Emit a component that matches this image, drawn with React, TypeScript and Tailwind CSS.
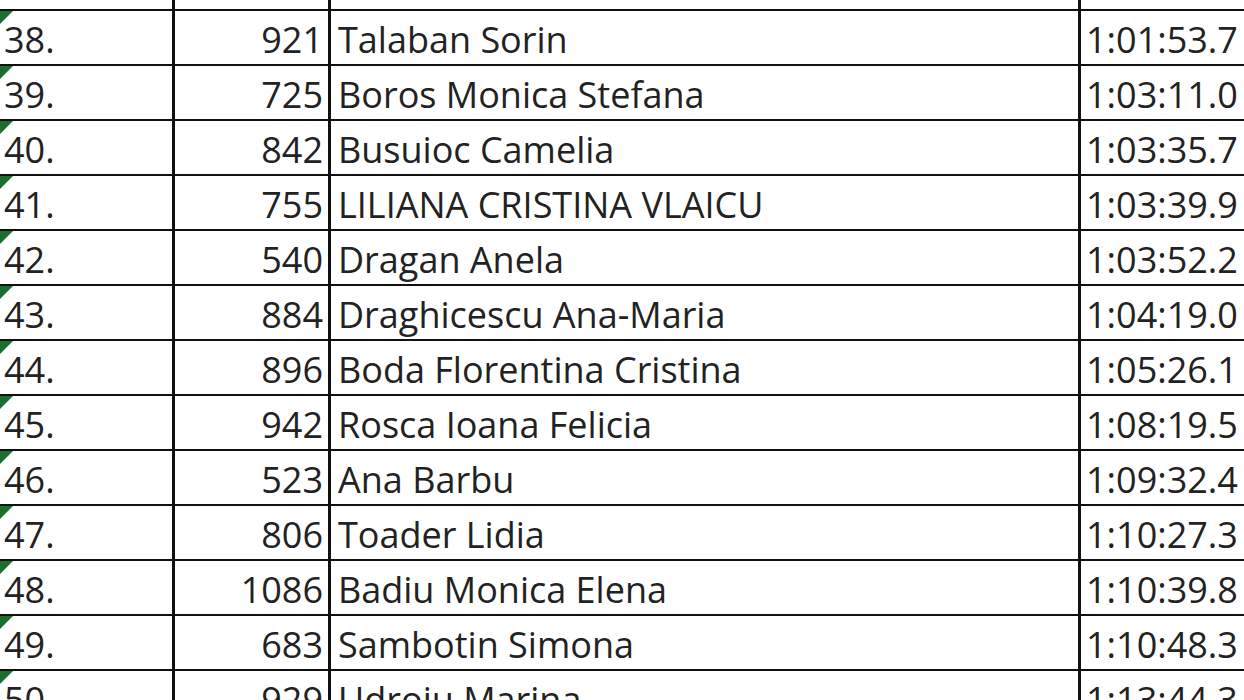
import React from "react";

type Row = { pos: string; bib: string; name: string; time: string };

const rows: Row[] = [
  { pos: "37.", bib: "", name: "", time: "" },
  { pos: "38.", bib: "921", name: "Talaban Sorin", time: "1:01:53.7" },
  { pos: "39.", bib: "725", name: "Boros Monica Stefana", time: "1:03:11.0" },
  { pos: "40.", bib: "842", name: "Busuioc Camelia", time: "1:03:35.7" },
  { pos: "41.", bib: "755", name: "LILIANA CRISTINA VLAICU", time: "1:03:39.9" },
  { pos: "42.", bib: "540", name: "Dragan Anela", time: "1:03:52.2" },
  { pos: "43.", bib: "884", name: "Draghicescu Ana-Maria", time: "1:04:19.0" },
  { pos: "44.", bib: "896", name: "Boda Florentina Cristina", time: "1:05:26.1" },
  { pos: "45.", bib: "942", name: "Rosca Ioana Felicia", time: "1:08:19.5" },
  { pos: "46.", bib: "523", name: "Ana Barbu", time: "1:09:32.4" },
  { pos: "47.", bib: "806", name: "Toader Lidia", time: "1:10:27.3" },
  { pos: "48.", bib: "1086", name: "Badiu Monica Elena", time: "1:10:39.8" },
  { pos: "49.", bib: "683", name: "Sambotin Simona", time: "1:10:48.3" },
  { pos: "50.", bib: "929", name: "Udroiu Marina", time: "1:13:44.3" },
];

// excel "number stored as text" marker
const Triangle = () => (
  <svg className="absolute left-0 top-0" width="13" height="13" viewBox="0 0 13 13">
    <polygon points="0,0 13,0 0,13" fill="#1c6e2e" />
  </svg>
);

export default function App() {
  return (
    <div
      className="h-[700px] w-[1244px] overflow-hidden bg-white text-[#222]"
      style={{ fontFamily: "'Open Sans', sans-serif" }}
    >
      <div className="mt-[-44px] flex flex-col">
        {rows.map((r) => (
          <div key={r.pos} className="flex h-[55px] border-b-2 border-[#111] text-[36px] leading-none">
            <div className="relative flex w-[175px] shrink-0 items-center border-r-[3px] border-[#111] pl-[4px] pt-[4px]">
              {r.bib && <Triangle />}
              {r.bib && r.pos}
            </div>
            <div className="flex w-[156px] shrink-0 items-center justify-end border-r-[3px] border-[#111] pr-[5px] pt-[4px]">
              {r.bib}
            </div>
            <div className="flex w-[750px] shrink-0 items-center border-r-[3px] border-[#111] pl-[7px] pt-[4px]">
              {r.name}
            </div>
            <div className="flex flex-1 items-center whitespace-nowrap pl-[5px] pt-[4px]">{r.time}</div>
          </div>
        ))}
      </div>
    </div>
  );
}
